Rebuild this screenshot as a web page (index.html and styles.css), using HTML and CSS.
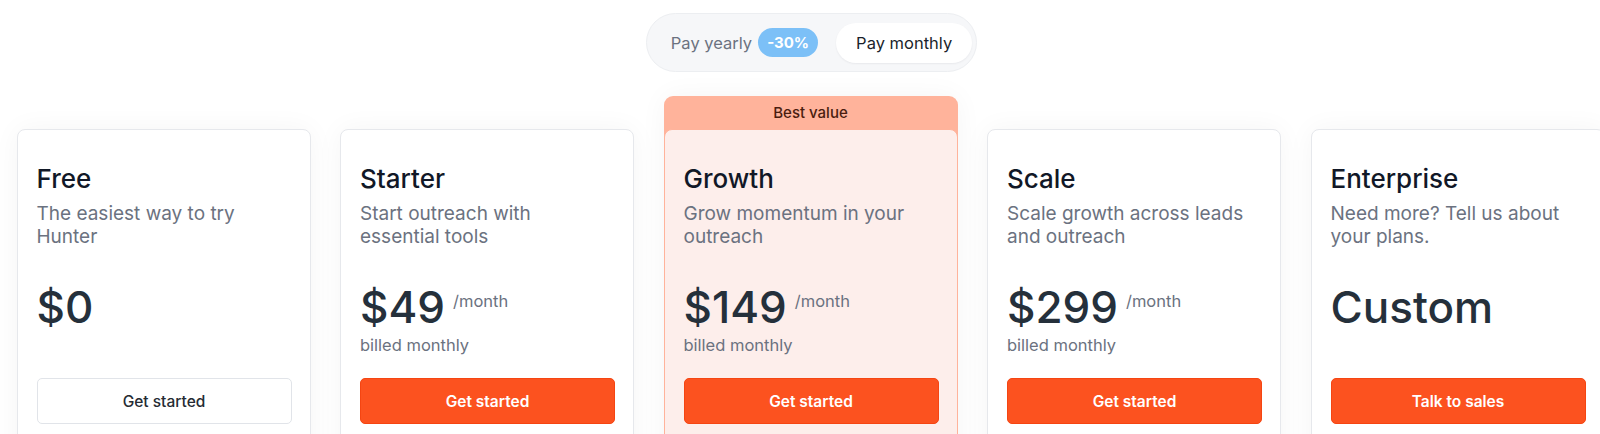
FILE: index.html
```html
<!DOCTYPE html>
<html lang="en">
<head>
<meta charset="utf-8">
<title>Pricing</title>
<link rel="stylesheet" href="styles.css">
</head>
<body>
<div class="page">
  <div class="toggle-row">
    <div class="toggle">
      <div class="seg seg-yearly">
        <span class="seg-label">Pay yearly</span>
        <span class="discount">-30%</span>
      </div>
      <div class="seg seg-monthly">Pay monthly</div>
    </div>
  </div>

  <div class="plans">
    <div class="card">
      <h2 class="plan-name">Free</h2>
      <p class="plan-desc">The easiest way to try Hunter</p>
      <div class="price-row"><span class="price">$0</span></div>
      <div class="billed">&nbsp;</div>
      <a class="btn btn-outline">Get started</a>
    </div>

    <div class="card">
      <h2 class="plan-name">Starter</h2>
      <p class="plan-desc">Start outreach with essential tools</p>
      <div class="price-row"><span class="price">$49</span><span class="per">/month</span></div>
      <div class="billed">billed monthly</div>
      <a class="btn btn-primary">Get started</a>
    </div>

    <div class="featured">
      <div class="featured-badge">Best value</div>
      <div class="card card-featured">
        <h2 class="plan-name">Growth</h2>
        <p class="plan-desc">Grow momentum in your outreach</p>
        <div class="price-row"><span class="price">$149</span><span class="per">/month</span></div>
        <div class="billed">billed monthly</div>
        <a class="btn btn-primary">Get started</a>
      </div>
    </div>

    <div class="card">
      <h2 class="plan-name">Scale</h2>
      <p class="plan-desc">Scale growth across leads and outreach</p>
      <div class="price-row"><span class="price">$299</span><span class="per">/month</span></div>
      <div class="billed">billed monthly</div>
      <a class="btn btn-primary">Get started</a>
    </div>

    <div class="card">
      <h2 class="plan-name">Enterprise</h2>
      <p class="plan-desc">Need more? Tell us about your plans.</p>
      <div class="price-row"><span class="price">Custom</span></div>
      <div class="billed">&nbsp;</div>
      <a class="btn btn-primary">Talk to sales</a>
    </div>
  </div>
</div>
</body>
</html>
```

FILE: styles.css
```css
* { box-sizing: border-box; }

html, body {
  margin: 0;
  padding: 0;
  background: #ffffff;
}

body {
  font-family: Inter, "Noto Sans", "Liberation Sans", sans-serif;
  color: #1f2937;
  overflow: hidden;
  width: 1600px;
  height: 434px;
}

.page {
  width: 1623px;
  height: 434px;
  overflow: hidden;
}

.toggle-row {
  display: flex;
  justify-content: center;
  padding-top: 13px;
}

.toggle {
  display: flex;
  align-items: center;
  height: 59px;
  padding: 0 4px 0 24px;
  background: #f6f7f9;
  border: 1px solid #eceef1;
  border-radius: 999px;
}

.seg-yearly {
  display: flex;
  align-items: center;
  gap: 6px;
  margin-right: 18px;
}

.seg-label {
  font-size: 16.5px;
  color: #6b7280;
}

.discount {
  display: inline-flex;
  align-items: center;
  justify-content: center;
  height: 29px;
  padding: 0 9px;
  border-radius: 999px;
  background: #7cc0f7;
  color: #ffffff;
  font-size: 15px;
  font-weight: 700;
}

.seg-monthly {
  display: flex;
  align-items: center;
  height: 40px;
  padding: 0 20px;
  background: #ffffff;
  border-radius: 999px;
  box-shadow: 0 1px 2px rgba(16, 24, 40, 0.06);
  font-size: 16.5px;
  color: #1a1f2b;
}

.plans {
  display: flex;
  align-items: flex-start;
  gap: 29.5px;
  padding: 24px 0 0 16.5px;
}

.card {
  flex: 0 0 294px;
  width: 294px;
  height: 340px;
  margin-top: 33px;
  padding: 33px 18px 0 19px;
  background: #ffffff;
  border: 1px solid #e6e8ec;
  border-radius: 8px;
  box-shadow: 0 0 28px rgba(17, 24, 39, 0.045);
  display: flex;
  flex-direction: column;
}

.featured {
  flex: 0 0 294px;
  width: 294px;
  background: #ffb39b;
  border-radius: 9px;
  box-shadow: 0 0 28px rgba(17, 24, 39, 0.045);
}

.featured-badge {
  height: 33px;
  line-height: 33px;
  text-align: center;
  font-size: 15px;
  font-weight: 500;
  color: #4a1d10;
}

.card-featured {
  margin-top: 0;
  border-color: #ffb39b;
  background: #fdeeeb;
  border-radius: 8px 8px 0 0;
  box-shadow: none;
}

.plan-name {
  margin: 0;
  font-size: 26px;
  line-height: 32px;
  font-weight: 500;
  color: #111827;
}

.plan-desc {
  margin: 7px 0 0;
  max-width: 252px;
  font-size: 19px;
  line-height: 23px;
  color: #6b7280;
  min-height: 46px;
}

.price-row {
  display: flex;
  align-items: flex-start;
  margin-top: 33.5px;
  height: 51px;
}

.price {
  font-size: 44px;
  line-height: 51px;
  font-weight: 500;
  color: #25303b;
}

.per {
  margin-left: 8px;
  margin-top: 7.5px;
  font-size: 16.5px;
  line-height: 24px;
  color: #6b7280;
}

.billed {
  font-size: 16.5px;
  line-height: 24px;
  color: #6b7280;
}

.btn {
  display: flex;
  align-items: center;
  justify-content: center;
  height: 46px;
  margin-top: 21.5px;
  border-radius: 5px;
  font-size: 15.5px;
  text-decoration: none;
}

.btn-primary {
  background: #fc521f;
  border: 1px solid #f54512;
  color: #ffffff;
  font-weight: 600;
}

.btn-outline {
  background: #ffffff;
  border: 1px solid #e1e4e9;
  color: #252b33;
  font-weight: 500;
}
```
